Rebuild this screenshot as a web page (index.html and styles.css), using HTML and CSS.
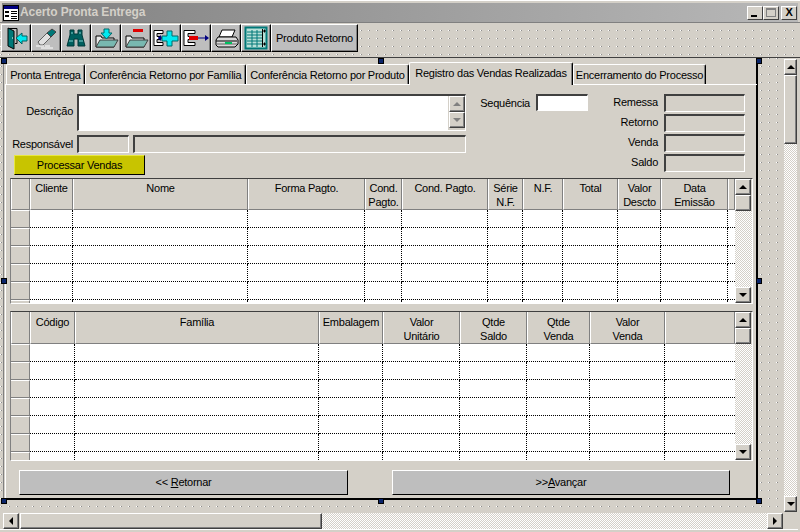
FILE: index.html
```html
<!DOCTYPE html>
<html lang="pt">
<head>
<meta charset="utf-8">
<title>Acerto Pronta Entrega</title>
<link rel="stylesheet" href="styles.css">
</head>
<body>
<div class="window">
  <header class="titlebar">
    <svg class="appicon" width="16" height="16" viewBox="0 0 16 16"><rect x="0.5" y="0.5" width="15" height="15" fill="#fff" stroke="#000"/><rect x="1" y="1" width="14" height="3" fill="#000080"/><path d="M2 6h4v2H2zM2 10h4v2H2z" fill="#000"/><path d="M8 6h6v1H8zM8 8h6v1H8zM8 11h6v1H8zM8 13h6v1H8z" fill="#000"/></svg>
    <span class="title">Acerto Pronta Entrega</span>
    <span class="wbtns">
      <span class="wbtn"><i class="g-min"></i></span>
      <span class="wbtn"><i class="g-max"></i></span>
      <span class="wbtn wclose">X</span>
    </span>
  </header>
  <div class="toolbar">
    <button class="tb"><svg width="26" height="24" viewBox="0 0 26 24"><path d="M5 2.500h9v15h-2" fill="none" stroke="#000"/><path d="M5 2l6 3v18l-6-3z" fill="#007878" stroke="#000"/><path d="M9 12h1" stroke="#fff"/><path d="M13 12l6-5v3h5v5h-5v3z" fill="#00e8f0" stroke="#006060"/></svg></button>
    <button class="tb"><svg width="26" height="24" viewBox="0 0 26 24"><path d="M5 16l9-9 4 4-8 8H7z" fill="#e0e0e0" stroke="#606060"/><path d="M14 7l5-4 4 3-5 5z" fill="#007878" stroke="#404040"/><path d="M3 20h8M12 20h5M8 22h12" stroke="#fff"/></svg></button>
    <button class="tb"><svg width="26" height="24" viewBox="0 0 26 24"><path d="M7 4h4v4h4V4h4v5l3 11h-7v-7h-4v7H4l3-11z" fill="#005f5f" stroke="#003838"/><path d="M8 7h2M16 7h2M6 15h4M16 15h4" stroke="#7fd0d0"/></svg></button>
    <button class="tb"><svg width="26" height="24" viewBox="0 0 26 24"><path d="M3 10h5l1 2h12v9H3z" fill="#e8e8e8" stroke="#000"/><path d="M3 21l4-7h18l-4 7z" fill="#78b8b0" stroke="#404040"/><path d="M11 3h5v4h3l-5.500 6L8 7h3z" fill="#00e8f0" stroke="#006868"/></svg></button>
    <button class="tb"><svg width="26" height="24" viewBox="0 0 26 24"><path d="M3 10h5l1 2h12v9H3z" fill="#e8e8e8" stroke="#000"/><path d="M3 21l4-7h18l-4 7z" fill="#78b8b0" stroke="#404040"/><rect x="10" y="3" width="10" height="3" fill="#e00000"/></svg></button>
    <button class="tb"><svg width="28" height="24" viewBox="0 0 28 24"><path d="M2 4.500h9v3H5v3h4v3H5v3h6v3H2z" fill="#fff" stroke="#000"/><path d="M6 12h6" stroke="#000080"/><path d="M6 12l3-3v6z" fill="#000080"/><path d="M15 5h5v5h6v5h-6v5h-5v-5h-5v-5h5z" fill="#00e8f0" stroke="#006868"/></svg></button>
    <button class="tb"><svg width="28" height="24" viewBox="0 0 28 24"><path d="M2 4.500h11v3H6v3h5v3H6v3h7v3H2z" fill="#fff" stroke="#000"/><rect x="7" y="10" width="9" height="4" fill="#e00000"/><path d="M16 12h8" stroke="#000080"/><path d="M23 9l4 3-4 3z" fill="#000080"/></svg></button>
    <button class="tb"><svg width="26" height="24" viewBox="0 0 26 24"><path d="M9 4h13l-3 7H6z" fill="#fff" stroke="#000"/><path d="M8 11H5l-2 3v5l2 2h17l3-3v-4l-2-3z" fill="#d8d8d8" stroke="#000"/><path d="M3 15h21" stroke="#000"/><path d="M3 18h21" stroke="#606060"/><rect x="12" y="16" width="7" height="2" fill="#00c060"/></svg></button>
    <button class="tb"><svg width="24" height="24" viewBox="0 0 24 24"><rect x="1.500" y="1.500" width="21" height="21" fill="#b8e0d8" stroke="#007878" stroke-width="2"/><path d="M3 6h15M3 9h15M3 12h15M3 15h15M3 18h15M8 4v17M13 4v17" stroke="#007878"/><path d="M18.500 3v18" stroke="#000"/><path d="M19 5h3M20.500 3.500v3M19 18h3M20.500 16.500v3" stroke="#000"/></svg></button>
    <button class="tb tb-text">Produto Retorno</button>
  </div>
  <div class="workspace">
    <main class="canvas">
      <i class="handle h-tl"></i><i class="handle h-tc"></i><i class="handle h-tr"></i>
      <i class="handle h-ml"></i><i class="handle h-mr"></i>
      <i class="handle h-bl"></i><i class="handle h-bc"></i><i class="handle h-br"></i>
      <div class="form">
        <nav class="tabs">
          <span class="tab t1">Pronta Entrega</span>
          <span class="tab t2">Conferência Retorno por Família</span>
          <span class="tab t3">Conferência Retorno por Produto</span>
          <span class="tab t4 active">Registro das Vendas Realizadas</span>
          <span class="tab t5">Encerramento do Processo</span>
        </nav>
        <section class="page">
          <div class="fields">
            <div class="leftcol">
              <div class="row-desc">
                <label class="lbl">Descrição</label>
                <div class="memo">
                  <span class="memo-sb">
                    <span class="sbtn memo-btn"><i class="arr up grey"></i></span>
                    <span class="sbtn memo-btn"><i class="arr down grey"></i></span>
                  </span>
                </div>
              </div>
              <div class="row-resp">
                <label class="lbl">Responsável</label>
                <span class="sunken s-code"></span>
                <span class="sunken s-name"></span>
              </div>
              <button class="process">Processar Vendas</button>
            </div>
            <div class="seq">
              <label class="lbl">Sequência</label>
              <span class="sunken s-seq"></span>
            </div>
            <div class="totals">
              <div class="tot"><label class="lbl">Remessa</label><span class="sunken s-tot"></span></div>
              <div class="tot"><label class="lbl">Retorno</label><span class="sunken s-tot"></span></div>
              <div class="tot"><label class="lbl">Venda</label><span class="sunken s-tot"></span></div>
              <div class="tot"><label class="lbl">Saldo</label><span class="sunken s-tot"></span></div>
            </div>
          </div>

          <div class="grid g1">
            <table>
              <colgroup><col class="c18"><col class="c43"><col class="c175"><col class="c117"><col class="c37"><col class="c86"><col class="c35"><col class="c40"><col class="c55"><col class="c43"><col class="c67"><col></colgroup>
              <thead><tr><th></th><th>Cliente</th><th>Nome</th><th>Forma Pagto.</th><th>Cond.<br>Pagto.</th><th>Cond. Pagto.</th><th>Série<br>N.F.</th><th>N.F.</th><th>Total</th><th>Valor<br>Descto</th><th>Data<br>Emissão</th><th></th></tr></thead>
              <tbody>
                <tr><th></th><td></td><td></td><td></td><td></td><td></td><td></td><td></td><td></td><td></td><td></td><td></td></tr>
                <tr><th></th><td></td><td></td><td></td><td></td><td></td><td></td><td></td><td></td><td></td><td></td><td></td></tr>
                <tr><th></th><td></td><td></td><td></td><td></td><td></td><td></td><td></td><td></td><td></td><td></td><td></td></tr>
                <tr><th></th><td></td><td></td><td></td><td></td><td></td><td></td><td></td><td></td><td></td><td></td><td></td></tr>
                <tr><th></th><td></td><td></td><td></td><td></td><td></td><td></td><td></td><td></td><td></td><td></td><td></td></tr>
                <tr><th></th><td></td><td></td><td></td><td></td><td></td><td></td><td></td><td></td><td></td><td></td><td></td></tr>
              </tbody>
            </table>
            <div class="vbar"><span class="sbtn"><i class="arr up"></i></span><span class="sbtn thumb"></span><span class="track"></span><span class="sbtn"><i class="arr down"></i></span></div>
          </div>

          <div class="grid g2">
            <table>
              <colgroup><col class="c18"><col class="c45"><col class="c244"><col class="c64"><col class="c77"><col class="c67b"><col class="c63"><col class="c75"><col></colgroup>
              <thead><tr><th></th><th>Código</th><th>Família</th><th>Embalagem</th><th>Valor<br>Unitário</th><th>Qtde<br>Saldo</th><th>Qtde<br>Venda</th><th>Valor<br>Venda</th><th></th></tr></thead>
              <tbody>
                <tr><th></th><td></td><td></td><td></td><td></td><td></td><td></td><td></td><td></td></tr>
                <tr><th></th><td></td><td></td><td></td><td></td><td></td><td></td><td></td><td></td></tr>
                <tr><th></th><td></td><td></td><td></td><td></td><td></td><td></td><td></td><td></td></tr>
                <tr><th></th><td></td><td></td><td></td><td></td><td></td><td></td><td></td><td></td></tr>
                <tr><th></th><td></td><td></td><td></td><td></td><td></td><td></td><td></td><td></td></tr>
                <tr><th></th><td></td><td></td><td></td><td></td><td></td><td></td><td></td><td></td></tr>
                <tr><th></th><td></td><td></td><td></td><td></td><td></td><td></td><td></td><td></td></tr>
              </tbody>
            </table>
            <div class="vbar"><span class="sbtn"><i class="arr up"></i></span><span class="sbtn thumb"></span><span class="track"></span><span class="sbtn"><i class="arr down"></i></span></div>
          </div>

          <div class="navrow">
            <button class="nav n-back">&lt;&lt; <u>R</u>etornar</button>
            <button class="nav n-next">&gt;&gt;<u>A</u>vançar</button>
          </div>
        </section>
      </div>
    </main>
    <aside class="wvbar">
      <span class="sbtn"><i class="arr up"></i></span>
      <span class="sbtn w-thumb"></span>
      <span class="track"></span>
      <span class="sbtn"><i class="arr down"></i></span>
    </aside>
  </div>
  <div class="whbar">
    <span class="sbtn"><i class="arr left"></i></span>
    <span class="sbtn h-thumb"></span>
    <span class="track"></span>
    <span class="sbtn"><i class="arr right"></i></span>
    <span class="corner"></span>
  </div>
</div>
</body>
</html>
```
FILE: styles.css
```css
* { box-sizing: border-box; }
html, body { margin: 0; padding: 0; }
body { width: 800px; height: 532px; overflow: hidden; background: #d4d0c8; font: 11px/13px "Liberation Sans", Arial, sans-serif; letter-spacing: -0.25px; color: #000; }
button { font: inherit; letter-spacing: inherit; color: #000; margin: 0; padding: 0; }
.window { width: 800px; height: 532px; display: flex; flex-direction: column; border-top: 1px solid #fff; background: #d4d0c8; padding-top: 2px; position: relative; }

.titlebar { height: 19px; margin: 0 2px; flex: none; display: flex; align-items: center; background: linear-gradient(90deg, #808080, #b8b8b8); padding-left: 1px; }
.appicon { flex: none; }
.title { margin-left: 1px; color: #d4d0c8; font-weight: bold; font-size: 12px; letter-spacing: -0.1px; }
.wbtns { margin-left: auto; display: flex; padding-right: 1px; }
.wbtn { width: 16px; height: 14px; background: #d4d0c8; border: 1px solid; border-color: #fff #404040 #404040 #fff; display: flex; align-items: center; justify-content: center; }
.wclose { margin-left: 2px; font: bold 11px/11px "Liberation Sans", sans-serif; }
.g-min { width: 6px; height: 2px; background: #000; margin-top: 6px; margin-right: 2px; }
.g-max { width: 10px; height: 9px; border: 1px solid #808080; border-top-width: 2px; }

.toolbar { flex: none; height: 35px; padding: 1px 0 0 1px; display: flex; align-items: flex-start; border-top: 1px solid #808080; }
.toolbar, .canvas { background-color: #d4d0c8; background-image: radial-gradient(circle at 0.5px 0.5px, #fff 0.5px, transparent 0.6px), radial-gradient(circle at 1.5px 0.5px, #8c8c8c 0.5px, transparent 0.6px); background-size: 8px 8px; }
.toolbar { background-position: 0 7px; }
.tb { width: 30px; height: 28px; background: #bebebe; border: 1px solid; border-color: #fff #000 #000 #fff; box-shadow: inset -1px -1px 0 #808080; display: flex; align-items: center; justify-content: center; }
.tb-text { width: 87px; }

.workspace { flex: 1; min-height: 0; display: flex; border-top: 1px solid #404040; }
.canvas { position: relative; flex: 1; min-width: 0; padding: 0 0 0 3px; }
.form { width: 755px; height: 442px; border-right: 2px solid #000; border-bottom: 2px solid #000; border-left: 1px solid #808080; padding: 4px 0 0 1px; background: #d4d0c8; }

.handle { position: absolute; width: 6px; height: 6px; background: #0a246a; border: 1px solid #000; }
.h-tl, .h-tc, .h-tr { top: 0; }
.h-ml, .h-mr { top: 220px; }
.h-bl, .h-bc, .h-br { top: 440px; }
.h-tl, .h-ml, .h-bl { left: 1px; }
.h-tc, .h-bc { left: 378px; }
.h-tr, .h-mr, .h-br { left: 756px; }

.tabs { display: flex; height: 22px; align-items: flex-end; padding-left: 1px; position: relative; z-index: 1; white-space: nowrap; }
.tab { height: 20px; padding-top: 2px; display: flex; align-items: center; justify-content: center; flex: none; border: 1px solid; border-color: #fff #000 transparent #fff; border-bottom: 0; border-radius: 2px 2px 0 0; box-shadow: inset -1px 0 0 #808080; }
.tab.active { height: 23px; padding-top: 0; padding-bottom: 1px; margin-bottom: -1px; background: #d4d0c8; border-bottom: 0; }
.t1 { width: 79px; }
.t2 { width: 161px; }
.t3 { width: 163px; }
.t4 { width: 164px; }
.t5 { width: 133px; }

.page { height: 414px; width: 752px; border-top: 1px solid #fff; border-left: 1px solid #fff; padding: 9px 0 0 4px; }
.fields { display: flex; height: 84px; }
.lbl { flex: none; text-align: right; }
.leftcol { width: 456px; flex: none; }
.row-desc { display: flex; align-items: flex-start; height: 37px; }
.row-desc .lbl { width: 63px; margin-top: 11px; }
.memo { margin-left: 4px; width: 389px; height: 37px; background: #fff; border: 1px solid; border-width: 2px 1px 1px 2px; border-color: #404040 #fff #fff #404040; display: flex; justify-content: flex-end; }
.memo-sb { width: 17px; display: flex; flex-direction: column; background: #d4d0c8; padding: 0 1px; }
.memo-btn { height: 17px; width: 15px; }
.row-resp { display: flex; align-items: center; height: 18px; margin-top: 4px; }
.row-resp .lbl { width: 63px; margin-right: 4px; }
.sunken { display: block; border: solid; border-width: 2px 1px 1px 2px; border-color: #404040 #fff #fff #404040; flex: none; }
.s-code { width: 52px; height: 18px; }
.s-name { width: 333px; height: 18px; margin-left: 4px; }
.process { display: block; margin: 2px 0 0 4px; width: 131px; height: 20px; padding-top: 1px; background: #c8c400; border: 1px solid; border-color: #e8e840 #000 #000 #e8e840; }

.seq { width: 126px; flex: none; display: flex; align-items: flex-start; margin-left: 12px; }
.seq .lbl { width: 52px; margin-top: 3px; }
.s-seq { width: 52px; height: 17px; background: #fff; margin-left: 6px; }
.totals { width: 141px; flex: none; margin-top: -1px; }
.tot { display: flex; justify-content: flex-end; align-items: center; height: 20px; }
.tot .lbl { margin: 0 6px 2px 0; }
.s-tot { width: 81px; height: 18px; }

.grid { width: 743px; display: flex; border: 1px solid; border-color: #404040 #fff #fff #808080; overflow: hidden; }
.g1 { height: 126px; }
.g2 { height: 150px; margin-top: 7px; }
.grid table { flex: none; width: 724px; border-collapse: separate; border-spacing: 0; table-layout: fixed; background: #fff; align-self: flex-start; }
.grid thead th { height: 31px; background: #d4d0c8; font-weight: normal; vertical-align: top; padding: 3px 0 0; border-right: 1px solid #808080; border-left: 1px solid #fff; border-bottom: 1px solid #808080; line-height: 13.5px; }
.g2 thead th { height: 32px; padding-top: 4px; }
.grid tbody th { height: 18px; background: #d4d0c8; border-top: 1px solid #fff; border-right: 1px solid #808080; border-bottom: 1px solid #808080; padding: 0; }
.grid td { height: 18px; border-right: 1px dotted #000; border-bottom: 1px dotted #000; padding: 0; }
.grid tr > td:last-child { border-right: 0; }
.c18 { width: 19px; } .c43 { width: 43px; } .c175 { width: 175px; } .c117 { width: 117px; } .c37 { width: 37px; } .c86 { width: 86px; } .c35 { width: 35px; } .c40 { width: 40px; } .c55 { width: 55px; } .c67 { width: 67px; }
.c45 { width: 45px; } .c244 { width: 244px; } .c64 { width: 64px; } .c77 { width: 77px; } .c67b { width: 67px; } .c63 { width: 63px; } .c75 { width: 75px; }

.vbar { flex: none; width: 17px; display: flex; flex-direction: column; }
.sbtn { flex: none; display: flex; align-items: center; justify-content: center; width: 16px; height: 16px; background: #d4d0c8; border: 1px solid; border-color: #fff #404040 #404040 #fff; box-shadow: inset -1px -1px 0 #808080; }
.track { flex: 1; background: repeating-conic-gradient(#fff 0 25%, #d4d0c8 0 50%) 0 0 / 2px 2px; }
.arr { display: block; width: 0; height: 0; border: 4px solid transparent; }
.arr.up { border-bottom-color: #000; border-top-width: 0; }
.arr.down { border-top-color: #000; border-bottom-width: 0; }
.arr.left { border-right-color: #000; border-left-width: 0; }
.arr.right { border-left-color: #000; border-right-width: 0; }
.arr.grey.up { border-bottom-color: #808080; }
.arr.grey.down { border-top-color: #808080; }

.navrow { display: flex; margin-top: 9px; padding-left: 9px; }
.nav { height: 25px; background: #bebebe; border: 1px solid; border-color: #fff #000 #000 #fff; }
.n-back { width: 329px; }
.n-next { width: 338px; margin-left: 44px; }

.wvbar { flex: none; width: 13px; display: flex; flex-direction: column; padding-top: 1px; margin: 0 3px 0 0; }
.wvbar .sbtn { width: 13px; }
.w-thumb { height: 69px; }
.whbar { flex: none; height: 16px; display: flex; padding-left: 3px; margin: 1px 2px 3px 0; box-shadow: 0 1px 0 #fff; }
.h-thumb { width: 302px; margin-left: 1px; }
.corner { flex: none; width: 15px; }
```
